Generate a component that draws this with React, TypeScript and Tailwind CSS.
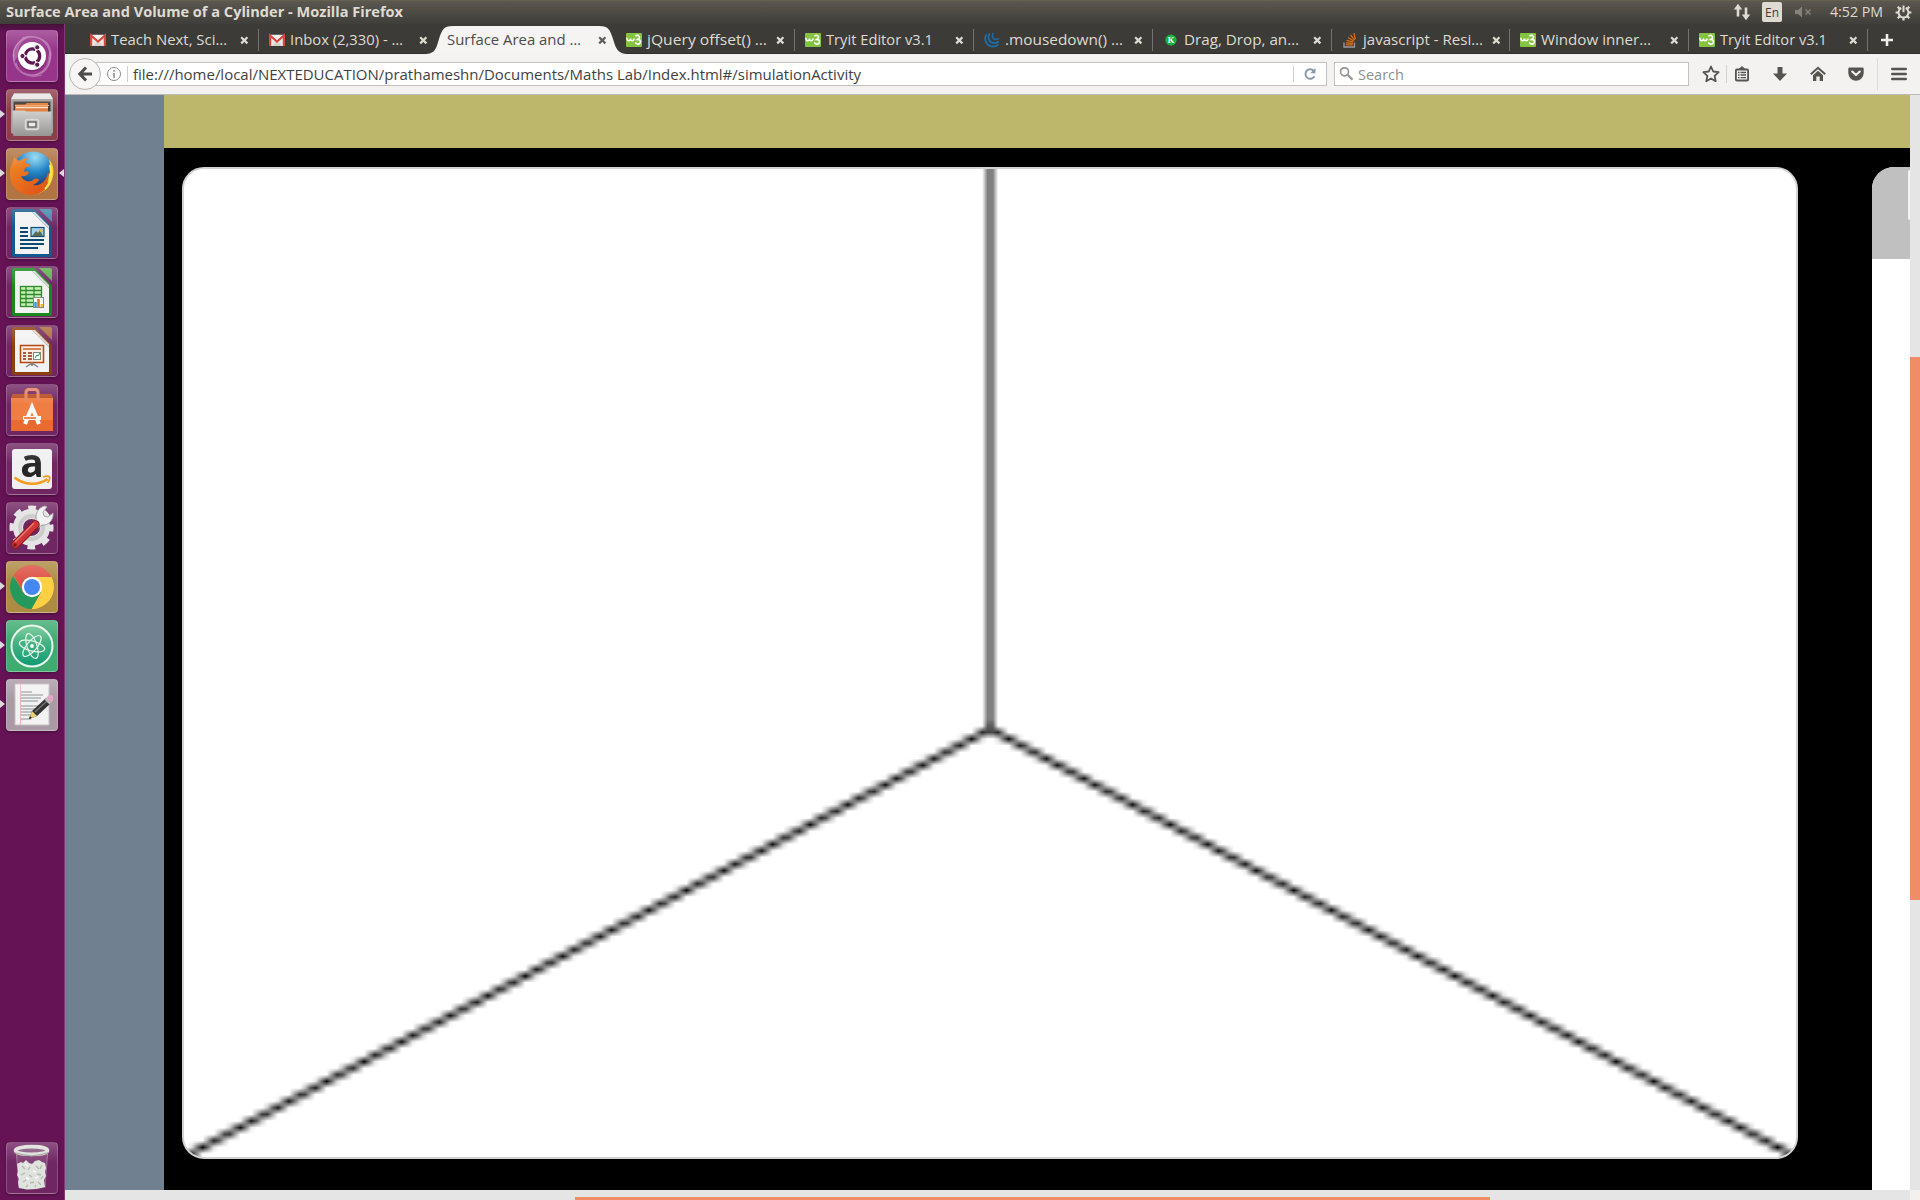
import React, { useEffect, useRef } from "react";

/* ---------- favicons ---------- */
const Gmail = () => (
  <svg width="16" height="16" viewBox="0 0 16 16">
    <path d="M1 3h14v11H1z" fill="#e9e7e4" />
    <path d="M3 14l5-5 5 5z" fill="#d5d2ce" />
    <path d="M1.100 14V3.500L8 9.500l6.900-6V14" fill="none" stroke="#d6493b" strokeWidth="2.200" />
    <path d="M2 2.800h12L8 7.800z" fill="#f3f1ef" />
  </svg>
);
const W3 = () => (
  <svg width="16" height="16" viewBox="0 0 16 16">
    <rect y="1" width="16" height="14" rx="1" fill="#85c440" />
    <path d="M.8 5.800q.2 3 1.800 3T4.500 6.500q.2 2.300 1.700 2.300T8.300 6.500" fill="none" stroke="#fff" strokeWidth="1.500" />
    <path d="M9.300 4.200q1.500-1.200 3.200-.6 2 1.200.3 3l-1.300.9q3 0 3 2.300-.4 2.400-2.700 2.300-1.700-.2-2.500-1.700" fill="none" stroke="#fff" strokeWidth="1.600" />
  </svg>
);
const JQuery = () => (
  <svg width="16" height="16" viewBox="0 0 16 16" fill="none" stroke="#1f6ba4" strokeLinecap="round">
    <path d="M2.200 3C-.5 8 3 14.300 8.500 14.500c2 .1 3.800-.4 5.200-1.500" strokeWidth="1.900" />
    <path d="M5.300 2C3.300 6 5.300 10.500 9.500 11c2 .2 3.600-.3 4.900-1.300" strokeWidth="1.800" />
    <path d="M9 1.500C7.500 4.500 9 7.300 11.800 7.500c1.200.1 2.100-.2 2.900-.8" strokeWidth="1.600" />
  </svg>
);
const KIcon = () => (
  <svg width="16" height="16" viewBox="0 0 16 16">
    <circle cx="8" cy="8" r="5.600" fill="#14b53c" />
    <text x="8" y="11" fontSize="8.500" fontWeight="700" textAnchor="middle" fill="#fff" fontFamily="Liberation Serif, serif">K</text>
  </svg>
);
const Stack = () => (
  <svg width="16" height="16" viewBox="0 0 16 16" fill="none">
    <path d="M2 10.500V15h10.500v-4.500" stroke="#9a9c9e" strokeWidth="1.300" />
    <path d="M3.800 12.800h7M3.900 10.800l7 .5M4.500 8.300l6.600 1.700M6 5.500l5.700 3.500M8.500 2.800l4 5.200M12 1l1.200 6.300" stroke="#e8700f" strokeWidth="1.200" />
  </svg>
);

type Tab = { title: string; width: number; icon?: React.ReactNode; active?: boolean };
const tabs: Tab[] = [
  { title: "Teach Next, Sci…", width: 116, icon: <Gmail /> },
  { title: "Inbox (2,330) - …", width: 113, icon: <Gmail /> },
  { title: "Surface Area and …", width: 134, active: true },
  { title: "jQuery offset() …", width: 120, icon: <W3 /> },
  { title: "Tryit Editor v3.1", width: 107, icon: <W3 /> },
  { title: ".mousedown() …", width: 118, icon: <JQuery /> },
  { title: "Drag, Drop, an…", width: 115, icon: <KIcon /> },
  { title: "javascript - Resi…", width: 120, icon: <Stack /> },
  { title: "Window inner…", width: 110, icon: <W3 /> },
  { title: "Tryit Editor v3.1", width: 107, icon: <W3 /> },
];

/* Text stretched or condensed to a known advance width. */
function Fit({ text, width, size, color, weight = 400 }: { text: string; width: number; size: number; color: string; weight?: number }) {
  return (
    <svg width={width} height="20" viewBox={`0 0 ${width} 20`} className="shrink-0 overflow-visible">
      <text x="0" y="15" fontSize={size} fontWeight={weight} fill={color} textLength={width} lengthAdjust="spacingAndGlyphs" fontFamily="'Open Sans', 'Noto Sans', sans-serif">
        {text}
      </text>
    </svg>
  );
}

function TabStrip() {
  return (
    <div className="flex h-[30px] items-stretch border-b border-[#2f2e2b] bg-[#3c3b37] pl-[15px]">
      {tabs.map((t, i) => (
        <div key={i} className="relative flex w-[178.8px] shrink-0 items-center">
          {t.active && (
            <svg className="absolute -left-[14px] top-[2px]" width="210" height="28" viewBox="0 0 210 28">
              <path d="M0 28C12 28 12 22 15 13S19 0 29 0H175c10 0 11 4 14 13s4 15 16 15z" fill="#f5f4f2" />
            </svg>
          )}
          <div className={t.active ? "relative flex items-center pl-[9px] pt-[3px]" : "relative flex items-center pl-[10px] pt-[3px]"}>
            {t.icon && <span className="mr-[5px] w-4">{t.icon}</span>}
            <Fit text={t.title} width={t.width} size={14} color={t.active ? "#4c4c4c" : "#dfdbd2"} />
          </div>
          <svg className="absolute left-[160px] top-[12px]" width="9" height="9" viewBox="0 0 9 9">
            <path d="M1.200 1.200l6.200 6.200M7.400 1.200L1.200 7.400" stroke={t.active ? "#605e5b" : "#dfdbd2"} strokeWidth="2.200" />
          </svg>
          {i !== 1 && i !== 2 && <i className="absolute right-0 top-[5px] h-[22px] w-px bg-[#74726d]" />}
        </div>
      ))}
      <svg className="ml-[12px] mt-[9px]" width="14" height="14" viewBox="0 0 14 14">
        <path d="M7 1v12M1 7h12" stroke="#eeece8" strokeWidth="2.600" />
      </svg>
    </div>
  );
}

function NavBar() {
  return (
    <div className="flex h-[41px] items-center border-b border-[#bcbab6] bg-[#f4f2f0] pl-[4px]">
      <div className="relative z-10 -mt-px flex h-8 w-8 shrink-0 items-center justify-center rounded-full border border-[#b8b5b0] bg-[#f7f6f5]">
        <svg width="16" height="16" viewBox="0 0 16 16" fill="none" stroke="#4c4c4c" strokeWidth="3">
          <path d="M9 1.500L2.800 8 9 14.500M3 8h12" />
        </svg>
      </div>
      <div className="-ml-[10px] flex h-6 w-[1236px] shrink-0 items-center border border-[#c5c1bb] bg-white pl-[14px]">
        <svg width="16" height="16" viewBox="0 0 16 16" fill="none" stroke="#8a8a8a" className="shrink-0">
          <circle cx="8" cy="8" r="6.500" strokeWidth="1" />
          <path d="M8 7v5M8 4v1.700" strokeWidth="1.500" />
        </svg>
        <i className="ml-[5px] mr-[5px] h-4 w-px shrink-0 bg-[#cfcfcf]" />
        <span className="flex pt-[2px]">
          <Fit text="file:///home/local/NEXTEDUCATION/prathameshn/Documents/Maths Lab/Index.html#/simulationActivity" width={728} size={14} color="#3f3f3f" />
        </span>
        <i className="ml-auto h-4 w-px shrink-0 bg-[#cfcfcf]" />
        <svg width="14" height="14" viewBox="0 0 14 14" className="ml-[9px] mr-[9px] shrink-0">
          <path d="M11.500 9.300A4.800 4.800 0 1 1 10.700 3.700" fill="none" stroke="#8b98a7" strokeWidth="2" />
          <path d="M12.500 1v5.300H7.200z" fill="#8b98a7" />
        </svg>
      </div>
      <div className="ml-[7px] flex h-6 w-[355px] shrink-0 items-center border border-[#c5c1bb] bg-white pl-[4px]">
        <svg width="16" height="16" viewBox="0 0 16 16" fill="none" stroke="#969696">
          <circle cx="5.500" cy="5.800" r="4" strokeWidth="1.700" />
          <path d="M8.500 8.800l5 5" strokeWidth="2.300" />
        </svg>
        <span className="ml-[3px] flex pt-[2px]"><Fit text="Search" width={46} size={14} color="#8f8f8f" /></span>
      </div>
      <div className="ml-[13px] flex items-center text-[#555450]">
        <svg width="18" height="18" viewBox="0 0 18 18" fill="none" stroke="currentColor" strokeWidth="1.800" strokeLinejoin="round">
          <path d="M9 1.500l2.200 5 5.400.6-4 3.700 1.100 5.400L9 13.500l-4.700 2.700 1.100-5.400-4-3.700 5.400-.6z" />
        </svg>
        <i className="ml-[6px] h-[18px] w-px bg-[#d5d2ce]" />
        <svg className="ml-[7px]" width="16" height="16" viewBox="0 0 16 16" fill="none" stroke="currentColor">
          <rect x="1.900" y="3.500" width="12.200" height="11" rx="1" strokeWidth="1.800" />
          <path d="M5 3.300L8 .6l3 2.700z" fill="currentColor" />
          <path d="M4 6.500h1.500M6.500 6.500H12M4 9h1.500M6.500 9H12M4 11.600h1.500M6.500 11.600H12" strokeWidth="1.300" />
        </svg>
        <svg className="ml-[22px]" width="16" height="16" viewBox="0 0 16 16">
          <path d="M5.500 1h5v6.500H15l-7 7.500-7-7.500h4.500z" fill="currentColor" />
        </svg>
        <svg className="ml-[22px]" width="16" height="16" viewBox="0 0 16 16">
          <path d="M.8 8.300L8 1.800l7.200 6.500" fill="none" stroke="currentColor" strokeWidth="2" />
          <path d="M3 9.300l5-4.600 5 4.600V15H9.700v-4.500H6.300V15H3z" fill="currentColor" />
        </svg>
        <svg className="ml-[22px]" width="16" height="16" viewBox="0 0 16 16">
          <path d="M1.500 1.500h13q1.200 0 1.200 1.200V7A7.700 7.700 0 0 1 .3 7V2.700q0-1.200 1.200-1.200z" fill="currentColor" />
          <path d="M4.200 5.500L8 9l3.800-3.500" fill="none" stroke="#f7f6f5" strokeWidth="2" strokeLinecap="round" strokeLinejoin="round" />
        </svg>
        <i className="ml-[13px] h-[32px] w-px bg-[#dedbd7]" />
        <svg className="ml-[13px]" width="16" height="14" viewBox="0 0 16 14" stroke="currentColor" strokeWidth="2.600" strokeLinecap="round">
          <path d="M1.300 2h13.400M1.300 7h13.400M1.300 12h13.400" />
        </svg>
      </div>
    </div>
  );
}

function TopPanel() {
  return (
    <div className="flex h-6 items-center border-t border-[#646150] bg-linear-to-b from-[#5c5850] to-[#3f3e3a] pl-[6px] pr-[8px]">
      <span className="flex pb-[2px]">
        <Fit text="Surface Area and Volume of a Cylinder - Mozilla Firefox" width={397} size={14} weight={700} color="#dfdbd2" />
      </span>
      <div className="ml-auto flex items-center pb-px">
        <svg width="18" height="18" viewBox="0 0 18 18" fill="#dfdbd2">
          <path d="M5 .8L9.200 6.500H6.300v7H3.700v-7H.8zM13 17.200l-4.200-5.700h2.900v-7h2.600v7h2.900z" />
        </svg>
        <span className="ml-[11px] flex h-5 w-5 items-center justify-center rounded-[2px] bg-[#dfdbd2]">
          <Fit text="En" width={14} size={12.5} color="#3f3e3a" />
        </span>
        <svg className="ml-[12px]" width="18" height="14" viewBox="0 0 18 14">
          <path d="M1 5h3l4-3.500v11L4 9H1z" fill="#85827a" />
          <path d="M11.500 4.500l5 5M16.500 4.500l-5 5" stroke="#85827a" strokeWidth="1.500" />
        </svg>
        <span className="ml-[18px] flex"><Fit text="4:52 PM" width={53} size={14} color="#dfdbd2" /></span>
        <svg className="ml-[12px]" width="17" height="17" viewBox="0 0 17 17" fill="none" stroke="#dfdbd2">
          <path d="M6.300 4A5 5 0 1 0 10.700 4" strokeWidth="2" />
          <path d="M8.500 1.500v6.700" strokeWidth="2" />
          <path d="M.6 8.500h2.800M13.600 8.500h2.800M8.500 13.600v2.800M2.700 2.700l2.200 2.200M14.300 2.700l-2.200 2.200M2.700 14.300l2.200-2.200M14.300 14.300l-2.200-2.200" strokeWidth="2.200" />
        </svg>
      </div>
    </div>
  );
}

/* ---------- launcher artwork, drawn on 52px tiles ---------- */
const Dash = () => (
  <>
    <path d="M8 30C5 17 15 5 29 7c14 3 19 14 14 26M44 22c2 15-7 24-19 23C13 44 6 35 8 24M16 8c13-5 27 2 28 17M36 45c-14 4-24-2-26-12" fill="none" stroke="#fff" strokeOpacity=".3" strokeWidth="1.300" />
    <path d="M8 32C3 18 14 6 28 7c-9 0-17 7-16 19zM44 20c4 14-6 26-19 25 9-1 17-7 17-17z" fill="#fff" fillOpacity=".22" />
    <circle cx="26" cy="27.500" r="14" fill="#5a1850" fillOpacity=".5" />
    <circle cx="26" cy="26" r="14" fill="#fff" />
    <circle cx="26.500" cy="26" r="7.200" fill="none" stroke="#5d1751" strokeWidth="3.300" strokeDasharray="13.600 1.480" strokeDashoffset="6.800" />
    <g fill="#5d1751" stroke="#fff" strokeWidth="1"><circle cx="16.500" cy="26" r="2.600" /><circle cx="31.200" cy="17.300" r="2.600" /><circle cx="31.200" cy="34.700" r="2.600" /></g>
  </>
);
const Files = () => (
  <>
    <defs><linearGradient id="fil" x1="0" y1="0" x2="0" y2="1"><stop offset="0" stopColor="#d2d1d0" /><stop offset="1" stopColor="#979695" /></linearGradient></defs>
    <path d="M8 4.500h36l3 6v33l-1 1H6l-1-1v-33z" fill="#a3a2a0" />
    <path d="M8 4.500h36l3 5.500H5z" fill="#e8e7e5" />
    <path d="M7.500 12.500h37v11h-37z" fill="#453c37" />
    <path d="M9 15.500h10l2-1.500h21v9H9z" fill="#df803f" />
    <path d="M9 16.500h34" stroke="#f0a76c" />
    <path d="M10 18.500h32" stroke="#fbe0cb" strokeWidth="1.500" />
    <path d="M6.500 21.500h12l2 1h25V46q0 1-1 1H8q-1 0-1-1z" fill="url(#fil)" />
    <rect x="19.500" y="30.500" width="13" height="10" rx="2" fill="#bebdbb" stroke="#dcdbda" strokeWidth="1.500" />
    <rect x="22" y="33" width="8" height="5" fill="#eceae8" stroke="#57524f" strokeWidth="1.200" />
  </>
);
const Firefox = () => (
  <>
    <defs>
      <radialGradient id="ffg" cx=".55" cy=".15" r=".8"><stop offset="0" stopColor="#8ad9f3" /><stop offset=".45" stopColor="#2586c7" /><stop offset="1" stopColor="#14285f" /></radialGradient>
      <linearGradient id="ffo" x1="0" y1="0" x2="1" y2="1"><stop offset="0" stopColor="#f28a24" /><stop offset="1" stopColor="#dc4b16" /></linearGradient>
    </defs>
    <circle cx="27" cy="24" r="20.500" fill="url(#ffg)" />
    <path d="M43 11c4 5 5 10 4.500 15C46 39 37 46 27 46.500c6-3 10-7 12-12 3-5 4-7 4-10l1 2c0-5 .5-10-1-15z" fill="#f8cf35" />
    <path d="M7 14l1-5c2 2 4 3 5 4 3-2 6-3 10-3-2 1-4 3-4 5l5 1c1 2-2 3-5 4l-1 4c1-1 3-1 5 0-1 4-5 5-8 4 2 5 8 7 12 4 2-2 5-2 6 0-2 3-4 4-6 5 5 1 9-1 12-5 2-3 3-6 3-9 1 4 1 8-1 12 3-3 4-6 5-10-1 13-9 22-22 22C12 47 3 37 4 24c0-4 1-7 3-10z" fill="url(#ffo)" />
    <path d="M44 17c2 9 1 18-5 24" fill="none" stroke="#fbe454" strokeWidth="2" />
  </>
);
const Doc = ({ c, light, children }: { c: string; light: string; children: React.ReactNode }) => (
  <>
    <path d="M8 2h20l18 18v28q0 2-2 2H8q-2 0-2-2V4q0-2 2-2z" fill={c} />
    <path d="M33 2h11q2 0 2 2v11z" fill={light} />
    <path d="M9 5h17l17 17v25H9z" fill="#f3f3f3" />
    <path d="M26 5l17 17v-3L29 5z" fill="#d9d9d9" />
    {children}
  </>
);
const Writer = () => (
  <Doc c="#11598f" light="#4185ae">
    <path d="M14 21h8M14 25h8M14 29h8M14 33h24M14 37h24M14 41h18" stroke="#0c4a74" strokeWidth="2" />
    <rect x="25" y="20.500" width="13" height="9" fill="#9fd0ec" stroke="#164f79" strokeWidth="1.200" />
    <path d="M26 29l4-5 2 2 2-3 3 6z" fill="#5b6b52" /><circle cx="35" cy="23.500" r="1.500" fill="#f2b632" />
  </Doc>
);
const Calc = () => (
  <Doc c="#188a1b" light="#5cae4d">
    <rect x="14.500" y="20.500" width="21" height="20" fill="#c9efb9" stroke="#2e8b2c" strokeWidth="1.300" />
    <path d="M14 24.500h22M14 28.500h22M14 32.500h22M14 36.500h22M20 20v21M28 20v21" stroke="#2e8b2c" strokeWidth="1.300" />
    <rect x="27.500" y="31.500" width="10" height="10" fill="#fff" stroke="#888" />
    <path d="M29.500 41v-5" stroke="#30a0dc" strokeWidth="2.500" /><path d="M32.500 41v-8" stroke="#df6a22" strokeWidth="2.500" /><path d="M35.800 41v-3" stroke="#f0bd20" strokeWidth="2.500" />
  </Doc>
);
const Impress = () => (
  <Doc c="#8b3f0d" light="#ad6c3a">
    <rect x="14.500" y="20.500" width="23" height="17" fill="#fbeee2" stroke="#b34a12" strokeWidth="1.500" />
    <path d="M17 24h18" stroke="#d98458" strokeWidth="2" /><path d="M17 28h3M17 31h3M17 34h3M22 28h4M22 31h4M22 34h4" stroke="#8a2f09" strokeWidth="1.500" />
    <rect x="27.500" y="27.500" width="7" height="7" fill="#fff" stroke="#7d8c7b" /><path d="M29 33l2-3 1 1 2-3" stroke="#2a9a3c" fill="none" />
    <path d="M20 42l6-4 6 4M26 38v3" stroke="#888" strokeWidth="1.500" fill="none" />
  </Doc>
);
const Software = () => (
  <>
    <path d="M5 13h42v34H5z" fill="#ea6b30" />
    <path d="M5 14h42v22H5z" fill="#f07d42" />
    <path d="M5 14l1.500-4h39l1.500 4z" fill="#b74d22" />
    <path d="M20 18V8.500q0-3 3-3h6q3 0 3 3V18" fill="none" stroke="#e8825b" strokeWidth="3" />
    <path d="M19 40l7-17 7 17M17 34h18" fill="none" stroke="#fff" strokeWidth="4" /><path d="M18 34h12" stroke="#ea5f22" strokeWidth="1.600" />
  </>
);
const Amazon = () => (
  <>
    <rect x="6" y="6" width="40" height="40" rx="3" fill="#f0f0f0" />
    <text x="26" y="34" fontSize="39" fontWeight="700" textAnchor="middle" fill="#262626" fontFamily="Open Sans, sans-serif">a</text>
    <path d="M8.500 34.500c10 8 24 8 33 1.500" fill="none" stroke="#f79b1c" strokeWidth="2.600" /><path d="M37 34c3-1.200 6-1 6.500 0s-.5 4-2 6" fill="none" stroke="#f79b1c" strokeWidth="1.800" />
  </>
);
const Settings = () => (
  <>
    <circle cx="25.500" cy="25.500" r="13.500" fill="none" stroke="#e4e4e4" strokeWidth="10" />
    <circle cx="25.500" cy="25.500" r="19.300" fill="none" stroke="#e4e4e4" strokeWidth="5.500" strokeDasharray="7.580 7.580" strokeDashoffset="3.790" />
    <circle cx="25.500" cy="25.500" r="11.500" fill="none" stroke="#cbcbcb" strokeWidth="4" />
    <path d="M31 20c-3-7 1-15 8-16l2 1-4 5 1 4 4 1 5-4c1 7-5 13-11 12l-4 3-4-3z" fill="#f1f1f1" stroke="#9f9f9f" />
    <path d="M9.500 42.500L29.500 22.500" stroke="#881919" strokeWidth="8.500" strokeLinecap="round" /><path d="M9.500 42.500L29.500 22.500" stroke="#d13636" strokeWidth="6.500" strokeLinecap="round" />
    <path d="M9 40L28 21" stroke="#e87c76" strokeWidth="1.500" /><circle cx="9" cy="43" r="1.800" fill="#72201d" />
  </>
);
const Chrome = () => (
  <>
    <path d="M26 26L7 15A22 22 0 0 1 45 15z" fill="#df5347" />
    <path d="M26 16h19.500A22 22 0 0 1 25.500 48L35 31z" fill="#fdcf44" />
    <path d="M17 31L7 15a22 22 0 0 0 18.500 33L35 31z" fill="#25995b" />
    <path d="M26 26V16h19.500L44 14H8l9 17z" fill="#df5347" />
    <circle cx="26" cy="26" r="10.200" fill="#fff" /><circle cx="26" cy="26" r="8" fill="#4587f1" />
  </>
);
const Atom = () => (
  <>
    <defs><linearGradient id="atm" x1="0" y1="0" x2="0" y2="1"><stop offset="0" stopColor="#6dc58f" /><stop offset="1" stopColor="#0f9a72" /></linearGradient></defs>
    <circle cx="26" cy="26" r="20.500" fill="url(#atm)" stroke="#e8f5ec" strokeWidth="2" />
    <g fill="none" stroke="#e6f6ec" strokeWidth="1.200"><ellipse cx="26" cy="26" rx="13" ry="5" transform="rotate(15 26 26)" /><ellipse cx="26" cy="26" rx="13" ry="5" transform="rotate(72 26 26)" /><ellipse cx="26" cy="26" rx="13" ry="5" transform="rotate(130 26 26)" /></g>
    <circle cx="26" cy="26" r="1.900" fill="#fff" />
  </>
);
const Gedit = () => (
  <>
    <path d="M9 5h34v41H9z" fill="#f3f2f2" stroke="#c5c1c3" />
    <path d="M14.500 5v41" stroke="#ecb5b5" strokeWidth="1" />
    <path d="M15 13h11M15 16h22M15 19h20M15 22h17M15 27h22M15 30h18M15 33h20M15 36h14M15 40h10" stroke="#aeb0b1" strokeWidth="1.300" />
    <path d="M23 40l3-8 14-13 5 5-14 13z" fill="#343434" /><path d="M23 40l3-8 5 5z" fill="#ead16e" /><path d="M23 40l1-3 2 2z" fill="#222" />
    <path d="M29 33l12-11" stroke="#777" strokeWidth="1.200" />
    <path d="M38.500 20.500l2-2 5 5-2 2z" fill="#bdbdbd" /><path d="M40.500 18.500l2-2q3-1 4 0t.5 5l-1.500 2z" fill="#e2a3c4" />
  </>
);
const Trash = () => (
  <>
    <path d="M10 11l3 35q12 3 25 0l4-35z" fill="#fff" fillOpacity=".12" />
    <path d="M10.500 12l2.500 34M41.500 12L39 46" stroke="#fff" strokeOpacity=".3" />
    <path d="M11 22l4-2 2 1 3-3 3 3 3 1 3-3 4-1 3 2 3 1 1 5-1 4 1 4-2 4 1 7-4 1-5 1-9 .5-8-1.500-1-6 1-3-2-4 1-4z" fill="#dfe2dd" />
    <path d="M16 24l3 3M24 25l-2 3M30 24l3 3M36 23l-2 4M15 33l4-2M23 33l3 2M31 32l4 1M37 34l-2 3M17 40l3-2M24 41l4-1M32 40l3 3M20 45l2-2M29 45l1-2" fill="none" stroke="#b3b9b0" strokeWidth="1.300" />
    <path d="M19 22l3 2M27 29l3 1M20 36l3 1M29 36l3-1" stroke="#fff" strokeWidth="1.500" />
    <ellipse cx="25.500" cy="8.500" rx="16" ry="3.900" fill="#85567c" stroke="#dfe0db" strokeWidth="3.600" />
    <path d="M8.500 10.500q16.500 6.500 34 0" fill="none" stroke="#9fa29a" strokeWidth="1.200" />
  </>
);

const apps: { art: React.ReactNode; bg: string; running?: boolean; focused?: boolean }[] = [
  { art: <Dash />, bg: "bg-[#97358a]" },
  { art: <Files />, bg: "bg-[#8d3e4b]", running: true },
  { art: <Firefox />, bg: "bg-[#b17443]", running: true, focused: true },
  { art: <Writer />, bg: "bg-[#702663]" },
  { art: <Calc />, bg: "bg-[#702663]" },
  { art: <Impress />, bg: "bg-[#702663]" },
  { art: <Software />, bg: "bg-[#702663]" },
  { art: <Amazon />, bg: "bg-[#702663]" },
  { art: <Settings />, bg: "bg-[#702663]" },
  { art: <Chrome />, bg: "bg-[#ae8b43]", running: true },
  { art: <Atom />, bg: "bg-[#3fab71]", running: true },
  { art: <Gedit />, bg: "bg-[#a99aa6]", running: true },
];

function Tile({ art, bg, running, focused }: (typeof apps)[number]) {
  return (
    <div className="relative flex h-[52px] w-16 shrink-0 pl-[6px]">
      {running && <i className="absolute left-0 top-[21px] border-y-[4.5px] border-l-[5px] border-y-transparent border-l-[#dcdadb]" />}
      <div className={`relative h-[52px] w-[52px] overflow-hidden rounded-[4px] shadow-[0_1px_3px_rgba(0,0,0,.35)] ${bg}`}>
        <svg width="52" height="52" viewBox="0 0 52 52" className="block">{art}</svg>
        <div className="absolute inset-0 rounded-[4px] border border-white/20 bg-linear-to-b from-white/20 to-transparent to-40%" />
      </div>
      {focused && <i className="absolute right-0 top-[21px] border-y-[4.5px] border-r-[5px] border-y-transparent border-r-[#dcdadb]" />}
    </div>
  );
}

function Launcher() {
  return (
    <aside className="flex w-[65px] shrink-0 flex-col gap-[7px] border-r border-[#7f3b73] bg-linear-to-b from-[#45103a] from-0% to-[#651355] to-[8px] pb-[6px] pt-[6px]">
      {apps.map((a, i) => <Tile key={i} {...a} />)}
      <div className="mt-auto"><Tile art={<Trash />} bg="bg-[#702663]" /></div>
    </aside>
  );
}

/* Three room edges meeting at a corner, on a stretched low-resolution canvas. */
function Corner() {
  const ref = useRef<HTMLCanvasElement>(null);
  useEffect(() => {
    const ctx = ref.current?.getContext("2d");
    if (!ctx) return;
    ctx.clearRect(0, 0, 300, 150);
    const edges = [[150, 0], [0, 150], [300, 150]];
    ctx.strokeStyle = "#000";
    for (const [x, y] of edges) {
      ctx.beginPath();
      ctx.moveTo(150, 85);
      ctx.lineTo(x, y);
      ctx.stroke();
    }
  }, []);
  return <canvas ref={ref} width={300} height={150} className="h-[992px] w-[1616px] shrink-0 rounded-[22px] border-2 border-[#d3d3d3] bg-white" />;
}

export default function App() {
  return (
    <div className="flex h-[1200px] w-[1920px] flex-col overflow-hidden font-['Open_Sans',sans-serif]">
      <TopPanel />
      <div className="flex min-h-0 flex-1">
        <Launcher />
        <main className="flex min-w-0 flex-1 flex-col">
          <TabStrip />
          <NavBar />
          <div className="flex min-h-0 flex-1">
            <div className="flex min-w-0 flex-1 flex-col">
              <div className="flex min-h-0 flex-1">
                <div className="w-[99px] shrink-0 bg-[#708090]" />
                <div className="flex min-w-0 flex-1 flex-col bg-black">
                  <div className="h-[53px] shrink-0 bg-[#bdb76b]" />
                  <div className="flex min-h-0 flex-1 items-start pl-[18px] pt-[19px]">
                    <Corner />
                    <div className="ml-[74px] flex w-[38px] shrink-0 flex-col self-stretch overflow-hidden rounded-tl-[22px] bg-white">
                      <div className="flex h-[92px] justify-end bg-[#c0c0c0] pt-[3px]">
                        <div className="h-[50px] w-[2px] rounded-l-[2px] bg-[#f4f4f4]" />
                      </div>
                    </div>
                  </div>
                </div>
              </div>
              <div className="flex h-[10px] shrink-0 items-end bg-[#e5e5e5] pl-[510px]">
                <div className="h-[3px] w-[915px] bg-[#f08c66]" />
              </div>
            </div>
            <div className="flex w-[10px] shrink-0 flex-col bg-[#e5e5e5]">
              <div className="mt-[262px] h-[543px] bg-[#f08c66]" />
              <div className="mt-auto h-[10px] bg-[#f2f1f0]" />
            </div>
          </div>
        </main>
      </div>
    </div>
  );
}
